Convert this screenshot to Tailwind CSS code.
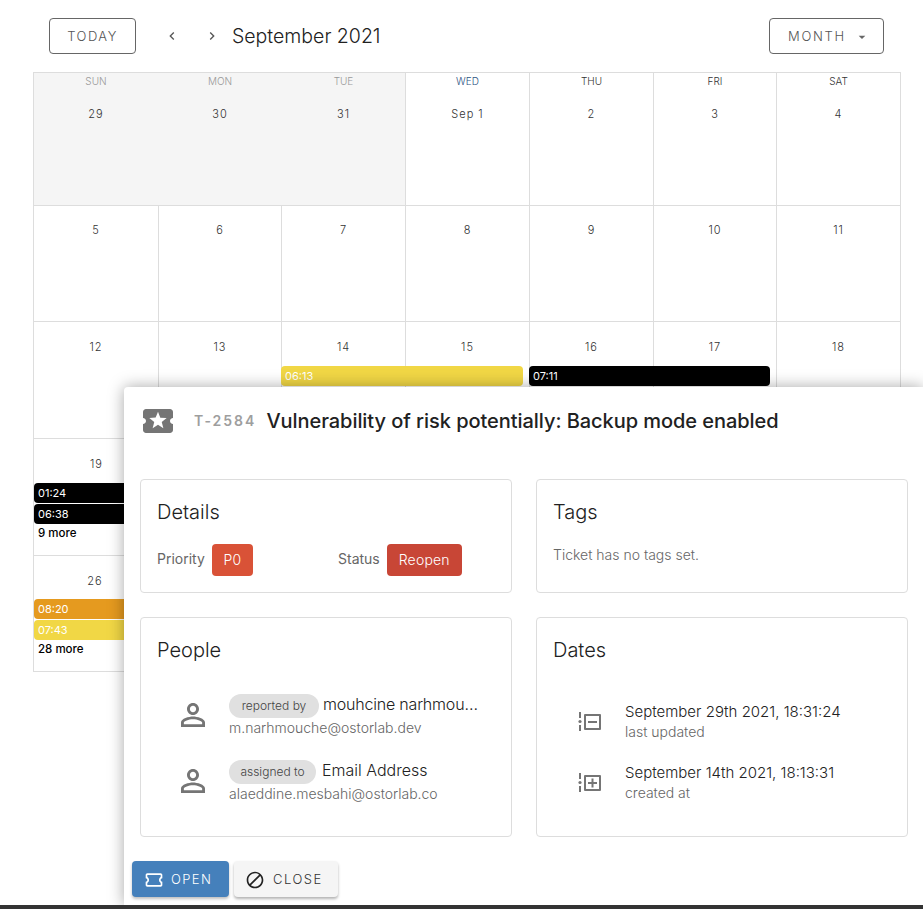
<!DOCTYPE html>
<html lang="en">
  <head>
    <meta charset="utf-8" />
    <title>Calendar</title>
    <script src="https://cdn.jsdelivr.net/npm/@tailwindcss/browser@4"></script>
  </head>
  <body class="bg-white font-['Inter',sans-serif] text-[#212121]">
    <div class="relative h-[909px] w-[923px] overflow-hidden">
      <!-- toolbar -->
      <header class="flex h-[72px] items-start pl-[49px] pr-[39px] pt-[18px]">
        <button class="h-9 w-[87px] rounded border border-[#666] pt-[2px] text-[13px] font-light tracking-[1.5px] text-[#555]">TODAY</button>
        <button class="ml-[30px] flex h-9 w-3 items-center justify-center">
          <svg class="h-4 w-4 shrink-0" viewBox="0 0 24 24" fill="#555"><path d="M15.41 7.41 14 6l-6 6 6 6 1.41-1.41L10.83 12z" /></svg>
        </button>
        <button class="ml-7 flex h-9 w-3 items-center justify-center">
          <svg class="h-4 w-4 shrink-0" viewBox="0 0 24 24" fill="#555"><path d="M8.59 16.59 10 18l6-6-6-6-1.41 1.41L13.17 12z" /></svg>
        </button>
        <h1 class="ml-[14px] text-[19.5px] font-light leading-9">September 2021</h1>
        <button class="ml-auto flex h-9 w-[115px] items-center gap-2 rounded border border-[#666] pl-[18px] pt-[1px] text-[13px] font-light tracking-[1.7px] text-[#555]">
          MONTH
          <svg class="h-4 w-4" viewBox="0 0 24 24" fill="#666"><path d="M7 10l5 5 5-5z" /></svg>
        </button>
      </header>

      <!-- calendar -->
      <section class="ml-[33px] w-[868px] border-l border-t border-[#ddd] font-light text-[#333]">
        <div class="grid h-[133px] grid-cols-[125px_123px_124px_124px_124px_123px_124px] border-b border-[#ddd]">
          <div class="flex flex-col items-center border-r border-transparent bg-[#f5f5f5] text-[#999]"><span class="mt-[2px] text-[10px] leading-[13px]">SUN</span><span class="mt-[18px] text-[11px] tracking-[1px] text-[#333]">29</span></div>
          <div class="flex flex-col items-center border-r border-transparent bg-[#f5f5f5] text-[#999]"><span class="mt-[2px] text-[10px] leading-[13px]">MON</span><span class="mt-[18px] text-[11px] tracking-[1px] text-[#333]">30</span></div>
          <div class="flex flex-col items-center border-r border-[#ddd] bg-[#f5f5f5] text-[#999]"><span class="mt-[2px] text-[10px] leading-[13px]">TUE</span><span class="mt-[18px] text-[11px] tracking-[1px] text-[#333]">31</span></div>
          <div class="flex flex-col items-center border-r border-[#ddd]"><span class="mt-[2px] text-[10px] leading-[13px] text-[#2c5282]">WED</span><span class="mt-[18px] text-[11px] tracking-[1px]">Sep 1</span></div>
          <div class="flex flex-col items-center border-r border-[#ddd]"><span class="mt-[2px] text-[10px] leading-[13px]">THU</span><span class="mt-[18px] text-[11px] tracking-[1px]">2</span></div>
          <div class="flex flex-col items-center border-r border-[#ddd]"><span class="mt-[2px] text-[10px] leading-[13px]">FRI</span><span class="mt-[18px] text-[11px] tracking-[1px]">3</span></div>
          <div class="flex flex-col items-center border-r border-[#ddd]"><span class="mt-[2px] text-[10px] leading-[13px]">SAT</span><span class="mt-[18px] text-[11px] tracking-[1px]">4</span></div>
        </div>

        <div class="grid h-[116px] grid-cols-[125px_123px_124px_124px_124px_123px_124px] border-b border-[#ddd] text-center text-[11px] leading-[15px] tracking-[1px]">
          <div class="border-r border-[#ddd] pt-[17px]">5</div>
          <div class="border-r border-[#ddd] pt-[17px]">6</div>
          <div class="border-r border-[#ddd] pt-[17px]">7</div>
          <div class="border-r border-[#ddd] pt-[17px]">8</div>
          <div class="border-r border-[#ddd] pt-[17px]">9</div>
          <div class="border-r border-[#ddd] pt-[17px]">10</div>
          <div class="border-r border-[#ddd] pt-[17px]">11</div>
        </div>

        <div class="relative grid h-[117px] grid-cols-[125px_123px_124px_124px_124px_123px_124px] border-b border-[#ddd] text-center text-[11px] leading-[15px] tracking-[1px]">
          <div class="border-r border-[#ddd] pt-[18px]">12</div>
          <div class="border-r border-[#ddd] pt-[18px]">13</div>
          <div class="border-r border-[#ddd] pt-[18px]">14</div>
          <div class="border-r border-[#ddd] pt-[18px]">15</div>
          <div class="border-r border-[#ddd] pt-[18px]">16</div>
          <div class="border-r border-[#ddd] pt-[18px]">17</div>
          <div class="border-r border-[#ddd] pt-[18px]">18</div>
          <div class="absolute left-[247px] top-[44px] h-5 w-[242px] rounded bg-[#f1d745] px-1 text-left text-[11px] font-normal leading-5 tracking-normal text-white">06:13</div>
          <div class="absolute left-[495px] top-[44px] h-5 w-[241px] rounded bg-black px-1 text-left text-[11px] font-normal leading-5 tracking-normal text-white">07:11</div>
        </div>

        <div class="h-[117px] w-[125px] border-b border-[#ddd] pt-[18px] text-center text-[11px] leading-[15px] tracking-[1px]">19</div>
        <div class="h-[116px] w-[125px] border-b border-[#ddd]"></div>
      </section>

      <!-- events under the ticket panel -->
      <div class="absolute left-[34px] top-[483px] flex w-[110px] flex-col gap-px text-[11px] leading-5 text-white">
        <div class="rounded bg-black px-1">01:24</div>
        <div class="rounded bg-black px-1">06:38</div>
        <div class="-mt-[2px] px-1 text-[11.5px] font-medium text-black">9 more</div>
      </div>
      <div class="absolute left-[33px] top-[573px] w-[125px] pr-[1px] text-center text-[11px] font-light tracking-[1px] text-[#333]">26</div>
      <div class="absolute left-[34px] top-[599px] flex w-[110px] flex-col gap-px text-[11px] leading-5 text-white">
        <div class="rounded bg-[#e59a1f] px-1">08:20</div>
        <div class="rounded bg-[#f1d745] px-1">07:43</div>
        <div class="-mt-[2px] px-1 text-[11.5px] font-medium text-black">28 more</div>
      </div>

      <!-- ticket panel -->
      <aside class="absolute left-[124px] top-[387px] h-[518px] w-[799px] rounded-tl bg-white shadow-[0_0_16px_rgba(0,0,0,0.35)]">
        <div class="flex h-[68px] items-center pb-[1px] pl-4">
          <svg class="h-9 w-9" viewBox="0 0 24 24" fill="#757575"><path d="M20 12c0-1.1.9-2 2-2V6c0-1.1-.9-2-2-2H4c-1.1 0-1.99.9-1.99 2v4c1.1 0 1.99.9 1.99 2s-.89 2-2 2v4c0 1.1.9 2 2 2h16c1.1 0 2-.9 2-2v-4c-1.1 0-2-.9-2-2zm-4.42 4.8L12 14.5l-3.58 2.3 1.08-4.12-3.29-2.69 4.24-.25L12 5.8l1.54 3.95 4.24.25-3.29 2.69 1.09 4.11z" /></svg>
          <span class="ml-[18px] text-[14px] font-semibold tracking-[2px] text-[#9e9e9e]">T-2584</span>
          <span class="ml-[10px] text-xl font-medium tracking-[-0.05px]">Vulnerability of risk potentially: Backup mode enabled</span>
        </div>

        <div class="grid grid-cols-[372px_372px] gap-x-6 gap-y-6 pl-4 pt-6">
          <div class="h-[114px] rounded border border-[#ddd] px-4 pt-[18px]">
            <h2 class="text-xl font-light leading-7">Details</h2>
            <div class="mt-[18px] flex items-start text-sm text-[#666]">
              <div class="flex w-[181px] items-start">
                <span class="leading-[30px]">Priority</span>
                <span class="ml-[7px] flex h-8 w-[41px] items-center justify-center rounded bg-[#d95237] text-sm font-light text-white">P0</span>
              </div>
              <span class="leading-[30px]">Status</span>
              <span class="ml-[7px] flex h-8 w-[75px] items-center justify-center rounded bg-[#c84636] text-sm font-light tracking-[0.2px] text-white">Reopen</span>
            </div>
          </div>

          <div class="h-[114px] rounded border border-[#ddd] px-4 pt-[18px]">
            <h2 class="text-xl font-light leading-7">Tags</h2>
            <p class="mt-[19px] text-sm font-light text-[#666]">Ticket has no tags set.</p>
          </div>

          <div class="h-[220px] rounded border border-[#ddd] px-4 pt-[18px]">
            <h2 class="text-xl font-light leading-7">People</h2>
            <div class="mt-[30px] flex items-center">
              <svg class="mb-[2px] ml-[18px] h-9 w-9 shrink-0" viewBox="0 0 24 24" fill="#757575"><path d="M12 5.9c1.16 0 2.1.94 2.1 2.1s-.94 2.1-2.1 2.1S9.9 9.16 9.9 8s.94-2.1 2.1-2.1m0 9c2.97 0 6.1 1.46 6.1 2.1v1.1H5.9V17c0-.64 3.13-2.1 6.1-2.1M12 4C9.79 4 8 5.79 8 8s1.79 4 4 4 4-1.79 4-4-1.79-4-4-4zm0 9c-2.67 0-8 1.34-8 4v3h16v-3c0-2.66-5.33-4-8-4z" /></svg>
              <div class="ml-[18px] min-w-0">
                <div class="flex items-center">
                  <span class="flex h-6 w-[90px] items-center justify-center rounded-full bg-[#e0e0e0] text-xs font-light text-[#444]">reported by</span>
                  <span class="mb-1 ml-1 w-[156px] truncate text-base font-light leading-5 tracking-[-0.2px] text-[#222]">mouhcine narhmouche</span>
                </div>
                <div class="text-sm font-light leading-5 text-[#666]">m.narhmouche@ostorlab.dev</div>
              </div>
            </div>
            <div class="mt-[22px] flex items-center">
              <svg class="mb-[2px] ml-[18px] h-9 w-9 shrink-0" viewBox="0 0 24 24" fill="#757575"><path d="M12 5.9c1.16 0 2.1.94 2.1 2.1s-.94 2.1-2.1 2.1S9.9 9.16 9.9 8s.94-2.1 2.1-2.1m0 9c2.97 0 6.1 1.46 6.1 2.1v1.1H5.9V17c0-.64 3.13-2.1 6.1-2.1M12 4C9.79 4 8 5.79 8 8s1.79 4 4 4 4-1.79 4-4-1.79-4-4-4zm0 9c-2.67 0-8 1.34-8 4v3h16v-3c0-2.66-5.33-4-8-4z" /></svg>
              <div class="ml-[18px] min-w-0">
                <div class="flex items-center">
                  <span class="flex h-6 w-[87px] items-center justify-center rounded-full bg-[#e0e0e0] text-xs font-light text-[#444]">assigned to</span>
                  <span class="mb-1 ml-[6px] text-base font-light leading-5 text-[#222]">Email Address</span>
                </div>
                <div class="text-sm font-light leading-5 text-[#666]">alaeddine.mesbahi@ostorlab.co</div>
              </div>
            </div>
          </div>

          <div class="h-[220px] rounded border border-[#ddd] px-4 pt-[18px]">
            <h2 class="text-xl font-light leading-7">Dates</h2>
            <div class="mt-[38px] flex items-center">
              <svg class="ml-[25px] h-[20px] w-[24px] shrink-0" viewBox="0 0 24 20" fill="#757575">
                <rect x="1" y="0" width="2" height="6" /><circle cx="2" cy="9.5" r="1.6" /><rect x="1" y="13" width="2" height="6" />
                <path fill-rule="evenodd" d="M7 2h15a1 1 0 0 1 1 1v14a1 1 0 0 1-1 1H7a1 1 0 0 1-1-1V3a1 1 0 0 1 1-1zm1 2v12h13V4z" />
                <rect x="10" y="9" width="9" height="2" />
              </svg>
              <div class="ml-[23px]">
                <div class="text-[15px] font-light leading-5 text-[#222]">September 29th 2021, 18:31:24</div>
                <div class="text-sm font-light leading-5 text-[#666]">last updated</div>
              </div>
            </div>
            <div class="mt-[21px] flex items-center">
              <svg class="ml-[25px] h-[20px] w-[24px] shrink-0" viewBox="0 0 24 20" fill="#757575">
                <rect x="1" y="0" width="2" height="6" /><circle cx="2" cy="9.5" r="1.6" /><rect x="1" y="13" width="2" height="6" />
                <path fill-rule="evenodd" d="M7 2h15a1 1 0 0 1 1 1v14a1 1 0 0 1-1 1H7a1 1 0 0 1-1-1V3a1 1 0 0 1 1-1zm1 2v12h13V4z" />
                <rect x="10" y="9" width="9" height="2" /><rect x="13.5" y="5.5" width="2" height="9" />
              </svg>
              <div class="ml-[23px]">
                <div class="text-[15px] font-light leading-5 text-[#222]">September 14th 2021, 18:13:31</div>
                <div class="text-sm font-light leading-5 text-[#666]">created at</div>
              </div>
            </div>
          </div>
        </div>

        <div class="mt-6 flex gap-[5px] pl-2">
          <button class="flex h-9 w-[97px] items-center gap-[7px] rounded bg-[#4580bb] pl-3 pt-[1px] text-[13px] font-light tracking-[1.4px] text-white shadow-[0_2px_3px_rgba(0,0,0,0.25)]">
            <svg class="h-5 w-5" viewBox="0 0 24 24" fill="#fff"><path d="M22 10V6c0-1.11-.9-2-2-2H4c-1.1 0-1.99.89-1.99 2v4c1.1 0 1.99.9 1.99 2s-.89 2-2 2v4c0 1.1.9 2 2 2h16c1.1 0 2-.9 2-2v-4c-1.1 0-2-.9-2-2s.9-2 2-2zm-2-1.46c-1.19.69-2 1.99-2 3.46s.81 2.77 2 3.46V18H4v-2.54c1.19-.69 2-1.99 2-3.46 0-1.48-.8-2.77-1.99-3.46L4 6h16v2.54z" /></svg>
            OPEN
          </button>
          <button class="flex h-9 w-[104px] items-center gap-2 rounded bg-[#f5f5f5] pl-[11px] pt-[1px] text-[13px] font-light tracking-[1.5px] text-[#333] shadow-[0_2px_3px_rgba(0,0,0,0.3)]">
            <svg class="h-5 w-5" viewBox="0 0 24 24" fill="#222"><path d="M12 2C6.48 2 2 6.48 2 12s4.48 10 10 10 10-4.48 10-10S17.52 2 12 2zM4 12c0-4.42 3.58-8 8-8 1.85 0 3.55.63 4.9 1.69L5.69 16.9C4.63 15.55 4 13.85 4 12zm8 8c-1.85 0-3.55-.63-4.9-1.69L18.31 7.1C19.37 8.45 20 10.15 20 12c0 4.42-3.58 8-8 8z" /></svg>
            CLOSE
          </button>
        </div>
      </aside>

      <!-- window edge -->
      <div class="absolute inset-x-0 bottom-0 h-1 bg-[#333]"></div>
    </div>
  </body>
</html>
